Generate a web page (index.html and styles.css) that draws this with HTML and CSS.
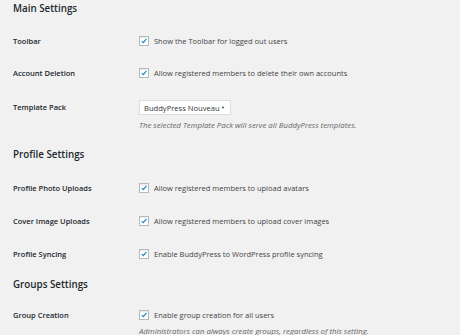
FILE: index.html
```html
<!DOCTYPE html>
<html>
<head>
<meta charset="utf-8">
<link rel="stylesheet" href="styles.css">
</head>
<body>
<div class="page">
  <h2 class="heading first">Main Settings</h2>
  <div class="row short">
    <div class="label">Toolbar</div>
    <div class="field"><span class="cb"><svg viewBox="0 0 9 9"><path d="M2 4.6 L3.8 6.4 L7.2 2.2" /></svg></span><span class="text">Show the Toolbar for logged out users</span></div>
  </div>
  <div class="row short">
    <div class="label">Account Deletion</div>
    <div class="field"><span class="cb"><svg viewBox="0 0 9 9"><path d="M2 4.6 L3.8 6.4 L7.2 2.2" /></svg></span><span class="text">Allow registered members to delete their own accounts</span></div>
  </div>
  <div class="row tall">
    <div class="label lab-select">Template Pack</div>
    <div class="field-col">
      <div class="select"><span>BuddyPress Nouveau</span><span class="arrow">▼</span></div>
      <div class="desc">The selected Template Pack will serve all BuddyPress templates.</div>
    </div>
  </div>

  <h2 class="heading second">Profile Settings</h2>
  <div class="row">
    <div class="label">Profile Photo Uploads</div>
    <div class="field"><span class="cb"><svg viewBox="0 0 9 9"><path d="M2 4.6 L3.8 6.4 L7.2 2.2" /></svg></span><span class="text">Allow registered members to upload avatars</span></div>
  </div>
  <div class="row">
    <div class="label">Cover Image Uploads</div>
    <div class="field"><span class="cb"><svg viewBox="0 0 9 9"><path d="M2 4.6 L3.8 6.4 L7.2 2.2" /></svg></span><span class="text">Allow registered members to upload cover images</span></div>
  </div>
  <div class="row">
    <div class="label">Profile Syncing</div>
    <div class="field"><span class="cb"><svg viewBox="0 0 9 9"><path d="M2 4.6 L3.8 6.4 L7.2 2.2" /></svg></span><span class="text">Enable BuddyPress to WordPress profile syncing</span></div>
  </div>

  <h2 class="heading">Groups Settings</h2>
  <div class="row tall2">
    <div class="label">Group Creation</div>
    <div class="field-col">
      <div class="field"><span class="cb"><svg viewBox="0 0 9 9"><path d="M2 4.6 L3.8 6.4 L7.2 2.2" /></svg></span><span class="text">Enable group creation for all users</span></div>
      <div class="desc">Administrators can always create groups, regardless of this setting.</div>
    </div>
  </div>
</div>
</body>
</html>
```
FILE: styles.css
```css
html, body {
  margin: 0;
  padding: 0;
  background: #f1f1f1;
  overflow: hidden;
}
.page {
  padding: 0 0 0 13px;
  font-family: "Open Sans", "Liberation Sans", sans-serif;
  color: #23282d;
  white-space: nowrap;
}
.heading {
  margin: 6px 0 7px;
  font-size: 9.8px;
  font-weight: 600;
  line-height: 18px;
  color: #23282d;
}
.heading.first {
  margin-top: 0;
}
.heading.second {
  margin-top: 7px;
}
.row {
  display: grid;
  grid-template-columns: 126px 1fr;
  align-items: center;
  height: 33px;
}
.row.short {
  height: 32px;
}
.row.tall {
  height: auto;
  align-items: start;
  padding: 11px 0 8px;
}
.row.tall2 {
  height: auto;
  align-items: start;
  padding: 8px 0 0;
}
.label {
  font-size: 7.5px;
  font-weight: 600;
  line-height: 12px;
  color: #23282d;
}
.lab-select {
  line-height: 15px;
}
.field {
  display: flex;
  align-items: center;
  gap: 5px;
  height: 12px;
}
.cb {
  width: 8px;
  height: 8px;
  background: #fff;
  border: 1px solid #b4b9be;
  box-shadow: inset 0 1px 1px rgba(0,0,0,0.08);
  display: flex;
}
.cb svg {
  width: 8px;
  height: 8px;
  fill: none;
  stroke: #1e8cbe;
  stroke-width: 1.4;
}
.text {
  font-size: 7.5px;
  line-height: 12px;
  color: #444;
}
.field-col {
  display: flex;
  flex-direction: column;
  align-items: flex-start;
}
.select {
  box-sizing: border-box;
  width: 92px;
  height: 15px;
  background: #fff;
  border: 1px solid #ddd;
  display: flex;
  align-items: center;
  justify-content: space-between;
  padding: 0 5px 0 4px;
  font-size: 7.6px;
  color: #32373c;
}
.arrow {
  font-size: 4px;
  color: #333;
}
.desc {
  margin-top: 4px;
  font-size: 7.8px;
  font-style: italic;
  line-height: 12px;
  color: #666;
}
```
